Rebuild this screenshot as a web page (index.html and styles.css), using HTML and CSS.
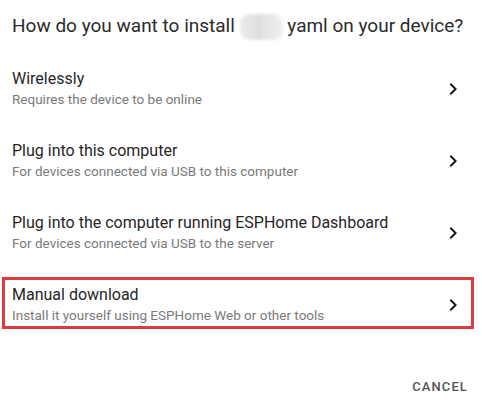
FILE: index.html
```html
<!DOCTYPE html>
<html lang="en">
<head>
<meta charset="utf-8">
<title>Install</title>
<link rel="stylesheet" href="styles.css">
</head>
<body>
<div class="dialog">
  <h2 class="title">How do you want to install <span class="blur"></span> yaml on your device?</h2>
  <ul class="list">
    <li class="item">
      <div class="texts">
        <span class="primary">Wirelessly</span>
        <span class="secondary">Requires the device to be online</span>
      </div>
      <svg class="chev" viewBox="0 0 24 24" width="24" height="24"><path d="M10 6L8.59 7.41 13.17 12l-4.58 4.59L10 18l6-6z"/></svg>
    </li>
    <li class="item">
      <div class="texts">
        <span class="primary">Plug into this computer</span>
        <span class="secondary">For devices connected via USB to this computer</span>
      </div>
      <svg class="chev" viewBox="0 0 24 24" width="24" height="24"><path d="M10 6L8.59 7.41 13.17 12l-4.58 4.59L10 18l6-6z"/></svg>
    </li>
    <li class="item">
      <div class="texts">
        <span class="primary">Plug into the computer running ESPHome Dashboard</span>
        <span class="secondary">For devices connected via USB to the server</span>
      </div>
      <svg class="chev" viewBox="0 0 24 24" width="24" height="24"><path d="M10 6L8.59 7.41 13.17 12l-4.58 4.59L10 18l6-6z"/></svg>
    </li>
    <li class="item highlighted">
      <div class="texts">
        <span class="primary">Manual download</span>
        <span class="secondary">Install it yourself using ESPHome Web or other tools</span>
      </div>
      <svg class="chev" viewBox="0 0 24 24" width="24" height="24"><path d="M10 6L8.59 7.41 13.17 12l-4.58 4.59L10 18l6-6z"/></svg>
      <span class="mark"></span>
    </li>
  </ul>
  <div class="actions">
    <button class="btn">Cancel</button>
  </div>
</div>
</body>
</html>
```

FILE: styles.css
```css
* { box-sizing: border-box; }
html, body { margin: 0; padding: 0; background: #fff; }
body { font-family: Roboto, "Noto Sans", sans-serif; width: 482px; height: 405px; overflow: hidden; }
.dialog { display: flex; flex-direction: column; }
.title {
  margin: 10px 0 11px 0;
  padding-left: 12px;
  font-size: 19px;
  line-height: 32px;
  font-weight: 400;
  color: #2b2b2b;
  white-space: nowrap;
}
.blur {
  display: inline-block;
  width: 43px;
  height: 26px;
  vertical-align: -8px;
  border-radius: 10px;
  background: linear-gradient(90deg, #ececec 0%, #dedede 45%, #e4e4e4 60%, #efefef 100%);
  filter: blur(1.5px);
}
.list { list-style: none; margin: 0; padding: 0; }
.item {
  position: relative;
  height: 72px;
  display: flex;
  align-items: center;
  padding: 0 17px 0 12px;
}
.texts { flex: 1; display: flex; flex-direction: column; }
.primary { font-size: 16px; line-height: 20px; color: #262626; }
.secondary { font-size: 13.5px; line-height: 20px; color: #7a7a7a; }
.chev { fill: #1a1a1a; flex: none; }
.mark {
  position: absolute;
  left: 2px;
  top: 8px;
  width: 472px;
  height: 52px;
  border: 3px solid #dc3b42;
}
.actions { display: flex; justify-content: flex-end; padding: 28px 14px 0 0; }
.btn {
  font-family: Roboto, sans-serif;
  font-size: 13px;
  font-weight: 500;
  letter-spacing: 1.1px;
  text-transform: uppercase;
  background: none;
  border: 0;
  padding: 0;
  height: 36px;
  line-height: 36px;
  color: #555;
}
```
